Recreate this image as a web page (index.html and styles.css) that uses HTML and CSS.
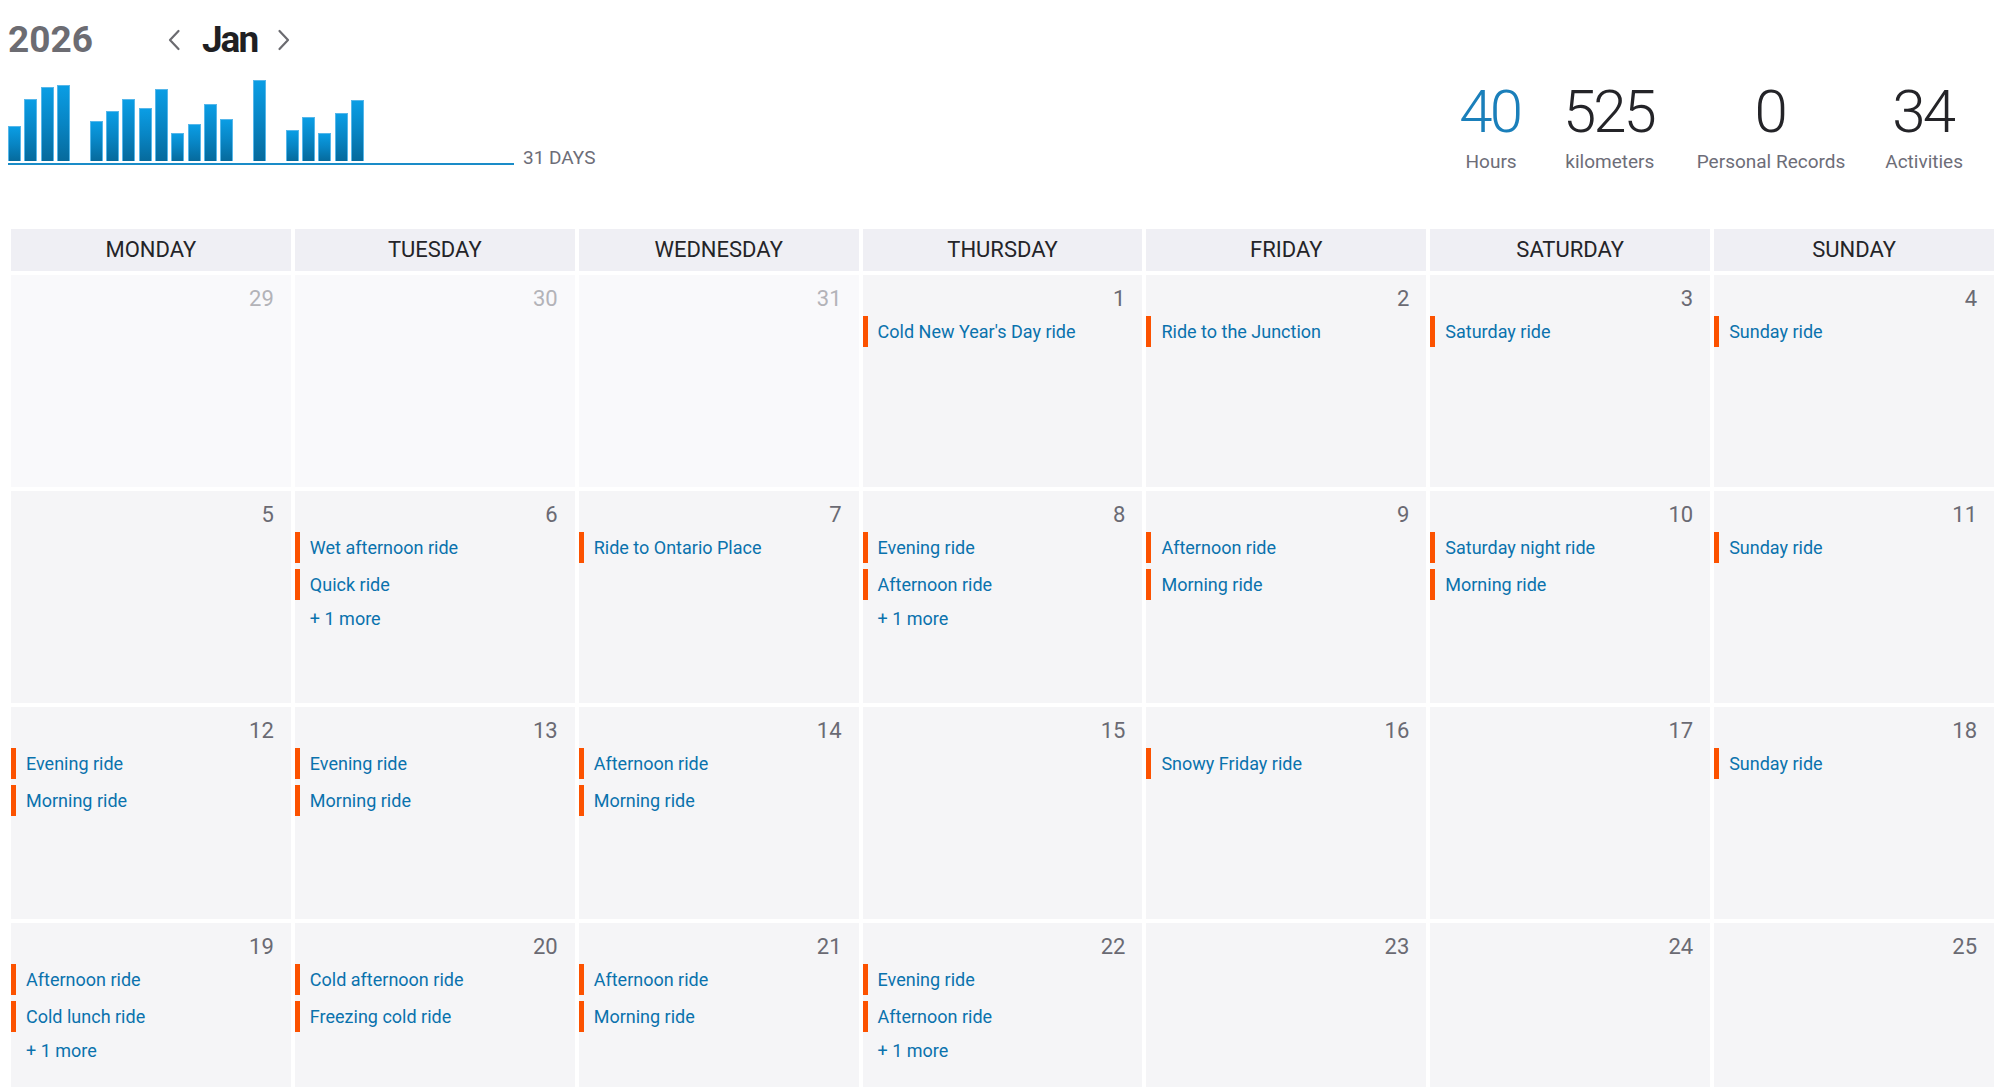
FILE: index.html
```html
<!DOCTYPE html>
<html lang="en">
<head>
<meta charset="utf-8">
<title>Training Calendar – Jan 2026</title>
<link rel="stylesheet" href="styles.css">
</head>
<body>
<div class="page">
  <header class="top">
    <div class="summary">
      <div class="title-row">
        <span class="year">2026</span>
        <button class="chev chev-prev" aria-label="Previous month">
          <svg width="14" height="22" viewBox="0 0 14 22"><polyline points="11.5,2 3,11 11.5,20" fill="none" stroke="#6b6b70" stroke-width="2.2" stroke-linecap="round" stroke-linejoin="round"/></svg>
        </button>
        <span class="month">Jan</span>
        <button class="chev chev-next" aria-label="Next month">
          <svg width="14" height="22" viewBox="0 0 14 22"><polyline points="2.5,2 11,11 2.5,20" fill="none" stroke="#6b6b70" stroke-width="2.2" stroke-linecap="round" stroke-linejoin="round"/></svg>
        </button>
      </div>
      <div class="chart-row">
        <div class="chart">
          <div class="slot"><div class="bar" style="height:35px"></div></div>
          <div class="slot"><div class="bar" style="height:62px"></div></div>
          <div class="slot"><div class="bar" style="height:74px"></div></div>
          <div class="slot"><div class="bar" style="height:76px"></div></div>
          <div class="slot"></div>
          <div class="slot"><div class="bar" style="height:40px"></div></div>
          <div class="slot"><div class="bar" style="height:50px"></div></div>
          <div class="slot"><div class="bar" style="height:62px"></div></div>
          <div class="slot"><div class="bar" style="height:53px"></div></div>
          <div class="slot"><div class="bar" style="height:72px"></div></div>
          <div class="slot"><div class="bar" style="height:28px"></div></div>
          <div class="slot"><div class="bar" style="height:37px"></div></div>
          <div class="slot"><div class="bar" style="height:57px"></div></div>
          <div class="slot"><div class="bar" style="height:42px"></div></div>
          <div class="slot"></div>
          <div class="slot"><div class="bar" style="height:81px"></div></div>
          <div class="slot"></div>
          <div class="slot"><div class="bar" style="height:31px"></div></div>
          <div class="slot"><div class="bar" style="height:44px"></div></div>
          <div class="slot"><div class="bar" style="height:28px"></div></div>
          <div class="slot"><div class="bar" style="height:48px"></div></div>
          <div class="slot"><div class="bar" style="height:61px"></div></div>
          <div class="slot"></div><div class="slot"></div><div class="slot"></div>
          <div class="slot"></div><div class="slot"></div><div class="slot"></div>
          <div class="slot"></div><div class="slot"></div><div class="slot"></div>
        </div>
        <span class="days">31 DAYS</span>
      </div>
    </div>
    <div class="stats">
      <div class="stat"><span class="stat-value stat-value-primary">40</span><span class="stat-label">Hours</span></div>
      <div class="stat"><span class="stat-value">525</span><span class="stat-label">kilometers</span></div>
      <div class="stat"><span class="stat-value">0</span><span class="stat-label">Personal Records</span></div>
      <div class="stat"><span class="stat-value">34</span><span class="stat-label">Activities</span></div>
    </div>
  </header>

  <section class="calendar">
    <div class="dow">MONDAY</div>
    <div class="dow">TUESDAY</div>
    <div class="dow">WEDNESDAY</div>
    <div class="dow">THURSDAY</div>
    <div class="dow">FRIDAY</div>
    <div class="dow">SATURDAY</div>
    <div class="dow">SUNDAY</div>

    <div class="day day-other"><div class="day-num">29</div></div>
    <div class="day day-other"><div class="day-num">30</div></div>
    <div class="day day-other"><div class="day-num">31</div></div>
    <div class="day"><div class="day-num">1</div><a class="event">Cold New Year's Day ride</a></div>
    <div class="day"><div class="day-num">2</div><a class="event">Ride to the Junction</a></div>
    <div class="day"><div class="day-num">3</div><a class="event">Saturday ride</a></div>
    <div class="day"><div class="day-num">4</div><a class="event">Sunday ride</a></div>

    <div class="day"><div class="day-num">5</div></div>
    <div class="day"><div class="day-num">6</div><a class="event">Wet afternoon ride</a><a class="event">Quick ride</a><a class="more">+ 1 more</a></div>
    <div class="day"><div class="day-num">7</div><a class="event">Ride to Ontario Place</a></div>
    <div class="day"><div class="day-num">8</div><a class="event">Evening ride</a><a class="event">Afternoon ride</a><a class="more">+ 1 more</a></div>
    <div class="day"><div class="day-num">9</div><a class="event">Afternoon ride</a><a class="event">Morning ride</a></div>
    <div class="day"><div class="day-num">10</div><a class="event">Saturday night ride</a><a class="event">Morning ride</a></div>
    <div class="day"><div class="day-num">11</div><a class="event">Sunday ride</a></div>

    <div class="day"><div class="day-num">12</div><a class="event">Evening ride</a><a class="event">Morning ride</a></div>
    <div class="day"><div class="day-num">13</div><a class="event">Evening ride</a><a class="event">Morning ride</a></div>
    <div class="day"><div class="day-num">14</div><a class="event">Afternoon ride</a><a class="event">Morning ride</a></div>
    <div class="day"><div class="day-num">15</div></div>
    <div class="day"><div class="day-num">16</div><a class="event">Snowy Friday ride</a></div>
    <div class="day"><div class="day-num">17</div></div>
    <div class="day"><div class="day-num">18</div><a class="event">Sunday ride</a></div>

    <div class="day"><div class="day-num">19</div><a class="event">Afternoon ride</a><a class="event">Cold lunch ride</a><a class="more">+ 1 more</a></div>
    <div class="day"><div class="day-num">20</div><a class="event">Cold afternoon ride</a><a class="event">Freezing cold ride</a></div>
    <div class="day"><div class="day-num">21</div><a class="event">Afternoon ride</a><a class="event">Morning ride</a></div>
    <div class="day"><div class="day-num">22</div><a class="event">Evening ride</a><a class="event">Afternoon ride</a><a class="more">+ 1 more</a></div>
    <div class="day"><div class="day-num">23</div></div>
    <div class="day"><div class="day-num">24</div></div>
    <div class="day"><div class="day-num">25</div></div>
  </section>
</div>
</body>
</html>
```

FILE: styles.css
```css
* { box-sizing: border-box; }

html, body {
  margin: 0;
  padding: 0;
  background: #ffffff;
}

body {
  font-family: Roboto, "Liberation Sans", Arial, sans-serif;
  color: #242428;
}

.page {
  width: 2000px;
}

/* ---------- Top summary ---------- */
.top {
  display: flex;
  justify-content: space-between;
  align-items: flex-start;
  height: 229px;
  padding: 0 37px 0 8px;
}

.summary {
  display: flex;
  flex-direction: column;
}

.title-row {
  display: flex;
  align-items: center;
  height: 36px;
  margin-top: 22px;
}

.year {
  font-size: 37px;
  line-height: 36px;
  font-weight: 700;
  color: #6c6c72;
}

.month {
  font-size: 37px;
  line-height: 36px;
  font-weight: 700;
  letter-spacing: -2px;
  color: #1f1f23;
}

.chev {
  display: flex;
  align-items: center;
  justify-content: center;
  padding: 0;
  border: 0;
  background: none;
  width: 14px;
  height: 22px;
  cursor: pointer;
}

.chev-prev {
  margin-left: 74px;
  margin-right: 21px;
}

.chev-next {
  margin-left: 20px;
}

.chart-row {
  display: flex;
  align-items: flex-end;
  margin-top: 19px;
}

.chart {
  display: flex;
  align-items: flex-end;
  width: 506px;
  height: 88px;
  padding-bottom: 2px;
  border-bottom: 2px solid #1a8cc8;
}

.slot {
  flex: 1 1 0;
  padding-right: 3.3px;
  display: flex;
  align-items: flex-end;
}

.bar {
  width: 100%;
  background: linear-gradient(to bottom, #0a9de4 0%, #0885c4 50%, #066a9c 100%);
  border: 1px solid #56b7ea;
  border-bottom: 0;
}

.days {
  margin-left: 9px;
  margin-bottom: -2px;
  font-size: 19px;
  line-height: 19px;
  color: #6d6d78;
}

.stats {
  display: flex;
  gap: 40px;
  padding-top: 82px;
}

.stat {
  display: flex;
  flex-direction: column;
  align-items: center;
}

.stat-value {
  font-size: 60px;
  line-height: 60px;
  font-weight: 300;
  letter-spacing: -3px;
  padding-right: 3px;
  color: #242428;
}

.stat-value-primary {
  color: #1a7fba;
}

.stat-label {
  margin-top: 10px;
  font-size: 19px;
  line-height: 19px;
  color: #6d6d78;
}

/* ---------- Calendar ---------- */
.calendar {
  display: grid;
  grid-template-columns: repeat(7, 1fr);
  grid-template-rows: 42px;
  grid-auto-rows: 212px;
  gap: 4px;
  margin: 0 6px 0 11px;
}

.dow {
  background: #efeff4;
  text-align: center;
  font-size: 22px;
  line-height: 42px;
  color: #242428;
}

.day {
  background: #f5f5f7;
  padding-top: 13px;
  display: flex;
  flex-direction: column;
  align-items: stretch;
}

.day-other {
  background: #f9f9fb;
}

.day-num {
  text-align: right;
  padding-right: 17px;
  font-size: 22px;
  line-height: 22px;
  color: #6a6a73;
  margin-bottom: 6px;
}

.day-other .day-num {
  color: #b3b3b8;
}

.event {
  display: block;
  height: 31px;
  border-left: 5px solid #fc5200;
  padding-left: 10px;
  font-size: 18px;
  line-height: 31px;
  color: #0a72ad;
  white-space: nowrap;
  overflow: hidden;
  cursor: pointer;
}

.event + .event {
  margin-top: 6px;
}

.more {
  display: block;
  margin-top: 8px;
  padding-left: 15px;
  font-size: 18px;
  line-height: 22px;
  color: #0a72ad;
  cursor: pointer;
}
```
